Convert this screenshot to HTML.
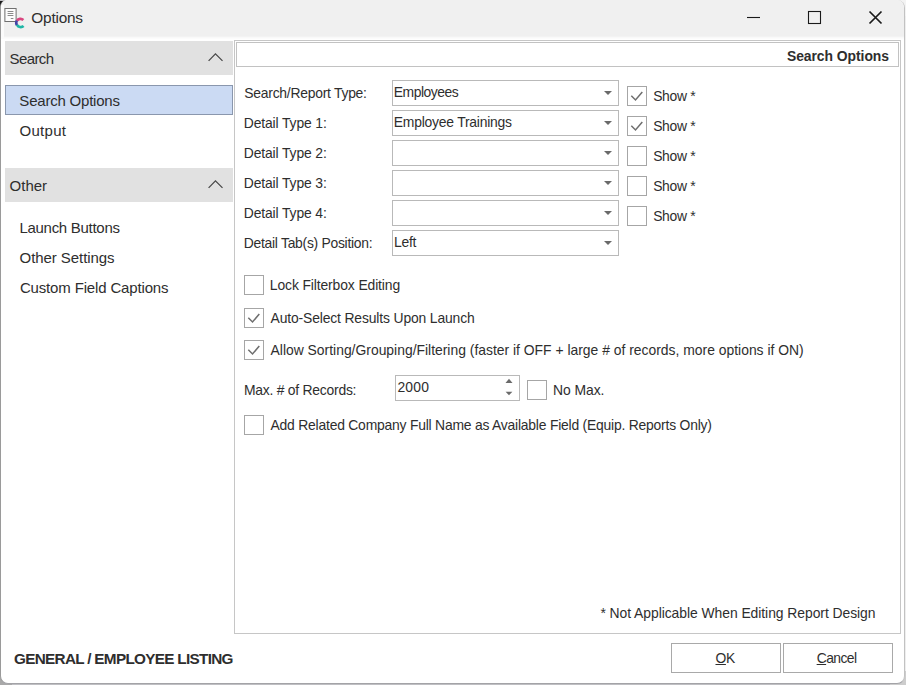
<!DOCTYPE html>
<html><head><meta charset="utf-8"><title>Options</title>
<style>
*{box-sizing:border-box;margin:0;padding:0}
html,body{width:906px;height:685px;overflow:hidden;background:#bfbfc3}
body{font-family:"Liberation Sans",sans-serif;color:#2e2e2e;font-size:14.5px;position:relative}
.win{position:absolute;left:0;top:0;width:905px;height:684px;background:#fff;border-radius:7px 8px 8px 8px;overflow:hidden;border:1px solid #a3a3a7;border-top:0;border-left-color:#9a9a9a;border-right-color:#c2c2c2}
.bg{position:absolute}
.tbar{position:absolute;left:0;top:0;width:100%;height:40px;background:linear-gradient(#f0f0f0 0,#f0f0f0 36px,#f9f9f9 37.500px,#fff 39.500px)}
.t{position:absolute;white-space:nowrap;line-height:20px;height:20px;transform-origin:0 50%}
.n{font-size:15px}
.f{font-size:13.9px}
.hdr{position:absolute;left:4px;width:228px;height:34px;background:#e1e1e1}
.combo{position:absolute;left:391px;width:227px;height:26px;border:1px solid #b9b9b9;background:#fff}
.combo i{position:absolute;right:6.500px;top:10px;width:0;height:0;border-left:4px solid transparent;border-right:4px solid transparent;border-top:4px solid #6a6a6a}
.cb{position:absolute;width:20px;height:20px;border:1px solid #a6a6a6;background:#fff}
.cb svg{position:absolute;left:-1px;top:-1px}
.btn{position:absolute;top:643px;width:110px;height:30px;border:1px solid #a9a9a9;background:#fff}
#title{letter-spacing:-0.237px;margin-left:0.36px;margin-top:0.00px}
#n1{letter-spacing:-0.580px;margin-left:-0.52px;margin-top:0.00px}
#n2{letter-spacing:-0.210px;margin-left:-0.67px;margin-top:0.00px}
#n3{letter-spacing:0.256px;margin-left:-0.41px;margin-top:0.00px}
#n4{letter-spacing:-0.026px;margin-left:-0.41px;margin-top:0.00px}
#n5{letter-spacing:-0.284px;margin-left:-0.59px;margin-top:0.00px}
#n6{letter-spacing:-0.069px;margin-left:-0.41px;margin-top:0.00px}
#n7{letter-spacing:-0.154px;margin-left:-0.13px;margin-top:0.00px}
#ph{letter-spacing:-0.041px;margin-left:-2.85px;margin-top:0.00px}
#l1{letter-spacing:-0.249px;margin-left:0.30px;margin-top:0.00px}
#l2{letter-spacing:-0.128px;margin-left:-0.25px;margin-top:0.00px}
#l3{letter-spacing:-0.128px;margin-left:-0.25px;margin-top:0.00px}
#l4{letter-spacing:-0.128px;margin-left:-0.25px;margin-top:0.00px}
#l5{letter-spacing:-0.128px;margin-left:-0.25px;margin-top:0.00px}
#l6{letter-spacing:-0.273px;margin-left:-0.25px;margin-top:0.00px}
#c1{letter-spacing:-0.482px;margin-left:-0.20px;margin-top:0.00px}
#c2{letter-spacing:-0.227px;margin-left:-0.20px;margin-top:0.00px}
#c3{letter-spacing:-0.326px;margin-left:0.12px;margin-top:0.00px}
#s1{letter-spacing:-0.300px;margin-left:0.17px;margin-top:0.00px}
#s2{letter-spacing:-0.300px;margin-left:0.17px;margin-top:0.00px}
#s3{letter-spacing:-0.300px;margin-left:0.17px;margin-top:0.00px}
#s4{letter-spacing:-0.300px;margin-left:0.17px;margin-top:0.00px}
#s5{letter-spacing:-0.300px;margin-left:0.17px;margin-top:0.00px}
#k1{letter-spacing:-0.118px;margin-left:-0.16px;margin-top:0.00px}
#k2{letter-spacing:-0.145px;margin-left:0.55px;margin-top:0.00px}
#k3{letter-spacing:0.001px;margin-left:0.55px;margin-top:0.00px}
#l7{letter-spacing:-0.236px;margin-left:-0.08px;margin-top:0.00px}
#c4{letter-spacing:0.245px;margin-left:0.39px;margin-top:0.00px}
#k4{letter-spacing:-0.039px;margin-left:-0.04px;margin-top:0.00px}
#k5{letter-spacing:-0.213px;margin-left:0.55px;margin-top:0.00px}
#fn{letter-spacing:-0.050px;margin-left:0.42px;margin-top:0.00px}
#bt{letter-spacing:-0.695px;margin-left:0.05px;margin-top:0.00px}
#b1{letter-spacing:-0.374px;margin-left:-0.52px;margin-top:0.00px}
#b2{letter-spacing:-0.562px;margin-left:-0.36px;margin-top:0.00px}

</style></head><body>
<div class="bg" style="left:0;top:1px;width:10px;height:9px;background:#1a1a1a"></div>
<div class="bg" style="left:0;top:10px;width:4px;height:660px;background:#9a9a9a"></div>
<div class="bg" style="left:0;top:670px;width:12px;height:15px;background:#a9a9a9"></div>
<div class="bg" style="left:890px;top:0;width:16px;height:16px;background:#f3f3f3"></div>
<div class="bg" style="left:905px;top:16px;width:1px;height:655px;background:#eeeeee"></div>
<div class="bg" style="left:890px;top:671px;width:16px;height:14px;background:#cdcdcd"></div>
<div class="win">
 <div class="tbar"></div>
 <div style="position:absolute;left:0;top:5px;width:2.500px;height:34px;background:#fbfbfb"></div>
 <!-- app icon -->
 <svg style="position:absolute;left:3px;top:6px" width="24" height="24" viewBox="0 0 24 24">
  <rect x="0.900" y="2.500" width="11.200" height="13" fill="#fcfcfc" stroke="#707070" stroke-width="1"/>
  <path d="M3.600 5.500h5.800M3.600 7.500h5.800M3.600 9.500h5.800M6.800 12.500h2.600" stroke="#8a8a8a" stroke-width="1" fill="none"/>
  <path d="M19.400 14a4.200 4.200 0 0 0-6.500 0.900" stroke="#d9467f" stroke-width="2.600" fill="none"/>
  <path d="M12.900 14.600a4.200 4.200 0 0 0 0.100 4.600" stroke="#4543a6" stroke-width="2.600" fill="none"/>
  <path d="M13 18.800a4.200 4.200 0 0 0 6.600 1.200" stroke="#1fb6a6" stroke-width="2.600" fill="none"/>
 </svg>
 <div class="t" id="title" style="left:30px;top:8px;font-size:15.4px">Options</div>
 <!-- window buttons -->
 <svg style="position:absolute;left:740px;top:5px" width="150" height="26" viewBox="0 0 150 26">
  <path d="M6 12.500h13" stroke="#1a1a1a" stroke-width="1.100" fill="none"/>
  <rect x="67.500" y="6.500" width="12" height="12" fill="none" stroke="#1a1a1a" stroke-width="1.100"/>
  <path d="M128.500 6.500l12 12M140.500 6.500l-12 12" stroke="#1a1a1a" stroke-width="1.700" fill="none"/>
 </svg>

 <!-- left nav -->
 <div class="hdr" style="top:41px"></div>
 <div class="t n" id="n1" style="left:9px;top:49px">Search</div>
 <svg style="position:absolute;left:206px;top:51px" width="18" height="12" viewBox="0 0 18 12"><path d="M1.600 9.900L8.450 2.900L15.500 9.900" fill="none" stroke="#4a4a4a" stroke-width="1.300"/></svg>
 <div style="position:absolute;left:4px;top:85px;width:228px;height:30px;background:#cbdaf3;border:1px solid #8a97ad"></div>
 <div class="t n" id="n2" style="left:19px;top:91px">Search Options</div>
 <div class="t n" id="n3" style="left:19px;top:121px">Output</div>
 <div class="hdr" style="top:168px"></div>
 <div class="t n" id="n4" style="left:9px;top:176px">Other</div>
 <svg style="position:absolute;left:206px;top:178px" width="18" height="12" viewBox="0 0 18 12"><path d="M1.600 9.900L8.450 2.900L15.500 9.900" fill="none" stroke="#4a4a4a" stroke-width="1.300"/></svg>
 <div class="t n" id="n5" style="left:19px;top:218px">Launch Buttons</div>
 <div class="t n" id="n6" style="left:19px;top:248px">Other Settings</div>
 <div class="t n" id="n7" style="left:19px;top:278px">Custom Field Captions</div>

 <!-- right panel -->
 <div style="position:absolute;left:233px;top:40px;width:667px;height:594px;border:1px solid #c6c6c6;background:#fff"></div>
 <div style="position:absolute;left:235px;top:42px;width:663px;height:25px;border:1px solid #c2c2c2;background:#fff"></div>
 <div class="t" id="ph" style="right:15px;top:46px;font-size:13.9px;font-weight:bold;transform-origin:100% 50%">Search Options</div>

 <div class="t f" id="l1" style="left:243px;top:83px">Search/Report Type:</div>
 <div class="t f" id="l2" style="left:243px;top:113px">Detail Type 1:</div>
 <div class="t f" id="l3" style="left:243px;top:143px">Detail Type 2:</div>
 <div class="t f" id="l4" style="left:243px;top:173px">Detail Type 3:</div>
 <div class="t f" id="l5" style="left:243px;top:203px">Detail Type 4:</div>
 <div class="t f" id="l6" style="left:243px;top:233px">Detail Tab(s) Position:</div>

 <div class="combo" style="top:80px"><i></i></div>
 <div class="combo" style="top:110px"><i></i></div>
 <div class="combo" style="top:140px"><i></i></div>
 <div class="combo" style="top:170px"><i></i></div>
 <div class="combo" style="top:200px"><i></i></div>
 <div class="combo" style="top:230px"><i></i></div>
 <div class="t f" id="c1" style="left:393px;top:82px">Employees</div>
 <div class="t f" id="c2" style="left:393px;top:112px">Employee Trainings</div>
 <div class="t f" id="c3" style="left:393px;top:232px">Left</div>

 <div class="cb" style="left:626px;top:86px"><svg width="20" height="20"><path d="M4.300 9.800L8.500 14L15.300 5.900" fill="none" stroke="#6e6e6e" stroke-width="1.500"/></svg></div>
 <div class="cb" style="left:626px;top:116px"><svg width="20" height="20"><path d="M4.300 9.800L8.500 14L15.300 5.900" fill="none" stroke="#6e6e6e" stroke-width="1.500"/></svg></div>
 <div class="cb" style="left:626px;top:146px"></div>
 <div class="cb" style="left:626px;top:176px"></div>
 <div class="cb" style="left:626px;top:206px"></div>
 <div class="t f" id="s1" style="left:652px;top:86px">Show *</div>
 <div class="t f" id="s2" style="left:652px;top:116px">Show *</div>
 <div class="t f" id="s3" style="left:652px;top:146px">Show *</div>
 <div class="t f" id="s4" style="left:652px;top:176px">Show *</div>
 <div class="t f" id="s5" style="left:652px;top:206px">Show *</div>

 <div class="cb" style="left:243px;top:275px"></div>
 <div class="t f" id="k1" style="left:269px;top:275px">Lock Filterbox Editing</div>
 <div class="cb" style="left:243px;top:308px"><svg width="20" height="20"><path d="M4.300 9.800L8.500 14L15.300 5.900" fill="none" stroke="#6e6e6e" stroke-width="1.500"/></svg></div>
 <div class="t f" id="k2" style="left:269px;top:308px">Auto-Select Results Upon Launch</div>
 <div class="cb" style="left:243px;top:340px"><svg width="20" height="20"><path d="M4.300 9.800L8.500 14L15.300 5.900" fill="none" stroke="#6e6e6e" stroke-width="1.500"/></svg></div>
 <div class="t f" id="k3" style="left:269px;top:340px">Allow Sorting/Grouping/Filtering (faster if OFF + large # of records, more options if ON)</div>

 <div class="t f" id="l7" style="left:243px;top:380px">Max. # of Records:</div>
 <div style="position:absolute;left:394px;top:375px;width:125px;height:26px;border:1px solid #b9b9b9;background:#fff"></div>
 <div class="t f" id="c4" style="left:396px;top:377px">2000</div>
 <svg style="position:absolute;left:502.500px;top:377px" width="10" height="20" viewBox="0 0 10 20"><path d="M1.500 6L5 1.800L8.500 6Z" fill="#6a6a6a"/><path d="M1.600 14.800L8.400 14.800L5 18.200Z" fill="#6a6a6a"/></svg>
 <div class="cb" style="left:526px;top:380px"></div>
 <div class="t f" id="k4" style="left:552px;top:380px">No Max.</div>

 <div class="cb" style="left:243px;top:415px"></div>
 <div class="t f" id="k5" style="left:269px;top:415px">Add Related Company Full Name as Available Field (Equip. Reports Only)</div>

 <div class="t f" id="fn" style="left:599px;top:603px">* Not Applicable When Editing Report Design</div>

 <div class="t" id="bt" style="left:13px;top:649px;font-size:15.300px;font-weight:bold">GENERAL / EMPLOYEE LISTING</div>
 <div class="btn" style="left:670px"></div>
 <div class="btn" style="left:782px"></div>
 <div class="t f" id="b1" style="left:715px;top:648px"><u>O</u>K</div>
 <div class="t f" id="b2" style="left:816px;top:648px"><u>C</u>ancel</div>
</div>
</body></html>
